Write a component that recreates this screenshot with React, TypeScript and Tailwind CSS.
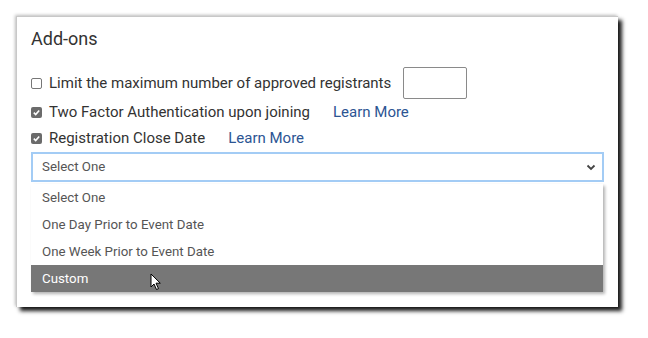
import React from 'react'

function Check({ checked }: { checked: boolean }) {
  if (!checked) {
    return <span className="block w-[11px] h-[11px] rounded-[2px] border border-[#777] bg-white" />
  }
  return (
    <span className="flex items-center justify-center w-[11px] h-[11px] rounded-[2px] bg-[#6b6b6b]">
      <svg width="9" height="9" viewBox="0 0 10 10">
        <path d="M2 5.2 L4.1 7.2 L8 2.8" fill="none" stroke="#fff" strokeWidth="1.8" />
      </svg>
    </span>
  )
}

function Cursor() {
  return (
    <svg className="absolute left-[119px] top-[8px]" width="12" height="18" viewBox="0 0 12 18">
      <path d="M1 1 L1 14 L4 11 L6.5 16.5 L8.5 15.6 L6 10.2 L10.3 10.2 Z" fill="#fff" stroke="#000" strokeWidth="1" strokeLinejoin="round" />
    </svg>
  )
}

export default function App() {
  const options = ['Select One', 'One Day Prior to Event Date', 'One Week Prior to Event Date']

  return (
    <div className="w-[648px] h-[338px] bg-white pt-4 pl-4" style={{ fontFamily: 'Roboto, "Liberation Sans", sans-serif' }}>
      <div className="w-[602px] h-[291px] bg-white border-l border-t border-[#c8c8c8] shadow-[4px_4px_4px_rgba(0,0,0,0.9),-1px_-1px_3px_rgba(0,0,0,0.25)] pl-[14px] pt-[10px]">
        {/* Title */}
        <h2 className="text-[18px] leading-[24px] text-[#333]">Add-ons</h2>

        {/* Checkbox rows */}
        <div className="mt-[16px] flex items-center h-[32px] text-[15px] text-[#333]">
          <Check checked={false} />
          <span className="ml-[7px]">Limit the maximum number of approved registrants</span>
          <span className="ml-[12px] w-[64px] h-[32px] border border-[#8a8a8a] rounded-[2px]" />
        </div>
        <div className="flex items-center h-[26px] text-[15px] text-[#333]">
          <Check checked />
          <span className="ml-[7px]">Two Factor Authentication upon joining</span>
          <span className="ml-[23px] text-[#2c5593]">Learn More</span>
        </div>
        <div className="flex items-center h-[26px] text-[15px] text-[#333]">
          <Check checked />
          <span className="ml-[7px]">Registration Close Date</span>
          <span className="ml-[23px] text-[#2c5593]">Learn More</span>
        </div>

        {/* Select */}
        <div className="mt-[1px] w-[573px] h-[30px] border-2 border-[#a3ccf5] flex items-center justify-between pl-[9px] pr-[6px] text-[13.3px] text-[#555]">
          <span>Select One</span>
          <svg width="10" height="7" viewBox="0 0 10 7">
            <path d="M1.5 1.5 L5 5 L8.5 1.5" fill="none" stroke="#444" strokeWidth="1.8" />
          </svg>
        </div>

        {/* Dropdown list */}
        <div className="mt-[2px] w-[572px] bg-white shadow-[2px_2px_3px_rgba(0,0,0,0.3)] text-[13.3px]">
          {options.map((o) => (
            <div key={o} className="h-[27px] flex items-center pl-[11px] text-[#555]">{o}</div>
          ))}
          <div className="relative h-[27px] flex items-center pl-[11px] bg-[#777] text-white">
            Custom
            <Cursor />
          </div>
        </div>
      </div>
    </div>
  )
}
